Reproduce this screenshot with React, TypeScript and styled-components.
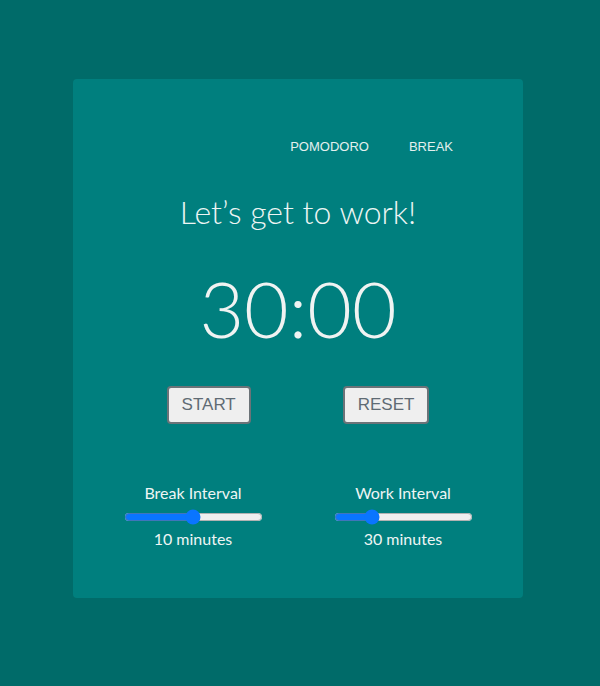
import React, { useState } from 'react';
import styled, { createGlobalStyle } from 'styled-components';

const Global = createGlobalStyle`
  html, body {
    margin: 0;
    padding: 0;
    background: #006b69;
    height: 100%;
  }
`;

const S = {
    Page: styled.div`
    width: 600px;
    height: 686px;
    display: flex;
    align-items: flex-start;
    justify-content: center;
    padding-top: 79px;
    box-sizing: border-box;
    background: #006b69;
    font-family: Lato, "Noto Sans", sans-serif;
    `,
    Card: styled.div`
    width: 450px;
    height: 519px;
    margin-left: -4px;
    background: #007f7e;
    border-radius: 4px;
    display: flex;
    flex-direction: column;
    align-items: center;
    box-sizing: border-box;
    padding-top: 60px;
    color: #eef5f4;
    `,
    Nav: styled.div`
    align-self: stretch;
    display: flex;
    justify-content: flex-end;
    gap: 40px;
    padding-right: 70px;
    `,
    NavItem: styled.button`
    background: none;
    border: none;
    padding: 0;
    color: #e4efee;
    font-family: "Liberation Sans", Arial, sans-serif;
    font-size: 13px;
    cursor: pointer;
    `,
    Title: styled.h1`
    margin: 39px 0 0;
    font-weight: 300;
    font-size: 32px;
    line-height: 1.2;
    color: #eef5f4;
    `,
    Time: styled.div`
    margin-top: 31px;
    font-weight: 300;
    font-size: 77px;
    line-height: 92px;
    color: #f0f3f2;
    `,
    Buttons: styled.div`
    display: flex;
    gap: 92px;
    margin-top: 32px;
    `,
    Button: styled.button`
    height: 38px;
    padding: 0 13px;
    background: #efefef;
    border: 2px solid #6b7378;
    border-radius: 4px;
    color: #5f6b74;
    font-family: "Liberation Sans", Arial, sans-serif;
    font-size: 17px;
    cursor: pointer;
    `,
    Intervals: styled.div`
    display: flex;
    gap: 71px;
    margin-top: 59px;
    `,
    Interval: styled.div`
    display: flex;
    flex-direction: column;
    align-items: center;
    width: 139px;
    `,
    Label: styled.div`
    font-size: 16px;
    line-height: 19px;
    color: #eef5f4;
    `,
    Range: styled.input`
    width: 139px;
    margin: 7px 0 4px;
    accent-color: #0a75ff;
    `,
    Minutes: styled.div`
    font-size: 16px;
    line-height: 19px;
    color: #eef5f4;
    `
}

const App = () => {
    const [brk, setBrk] = useState(10);
    const [work, setWork] = useState(30);
    return <S.Page>
        <Global />
        <S.Card>
            <S.Nav>
                <S.NavItem>POMODORO</S.NavItem>
                <S.NavItem>BREAK</S.NavItem>
            </S.Nav>
            <S.Title>Let’s get to work!</S.Title>
            <S.Time>{work}:00</S.Time>
            <S.Buttons>
                <S.Button>START</S.Button>
                <S.Button>RESET</S.Button>
            </S.Buttons>
            <S.Intervals>
                <S.Interval>
                    <S.Label>Break Interval</S.Label>
                    <S.Range type="range" min={0} max={20} value={brk} onChange={e => setBrk(+e.target.value)} />
                    <S.Minutes>{brk} minutes</S.Minutes>
                </S.Interval>
                <S.Interval>
                    <S.Label>Work Interval</S.Label>
                    <S.Range type="range" min={0} max={120} value={work} onChange={e => setWork(+e.target.value)} />
                    <S.Minutes>{work} minutes</S.Minutes>
                </S.Interval>
            </S.Intervals>
        </S.Card>
    </S.Page>
}

export default App;
